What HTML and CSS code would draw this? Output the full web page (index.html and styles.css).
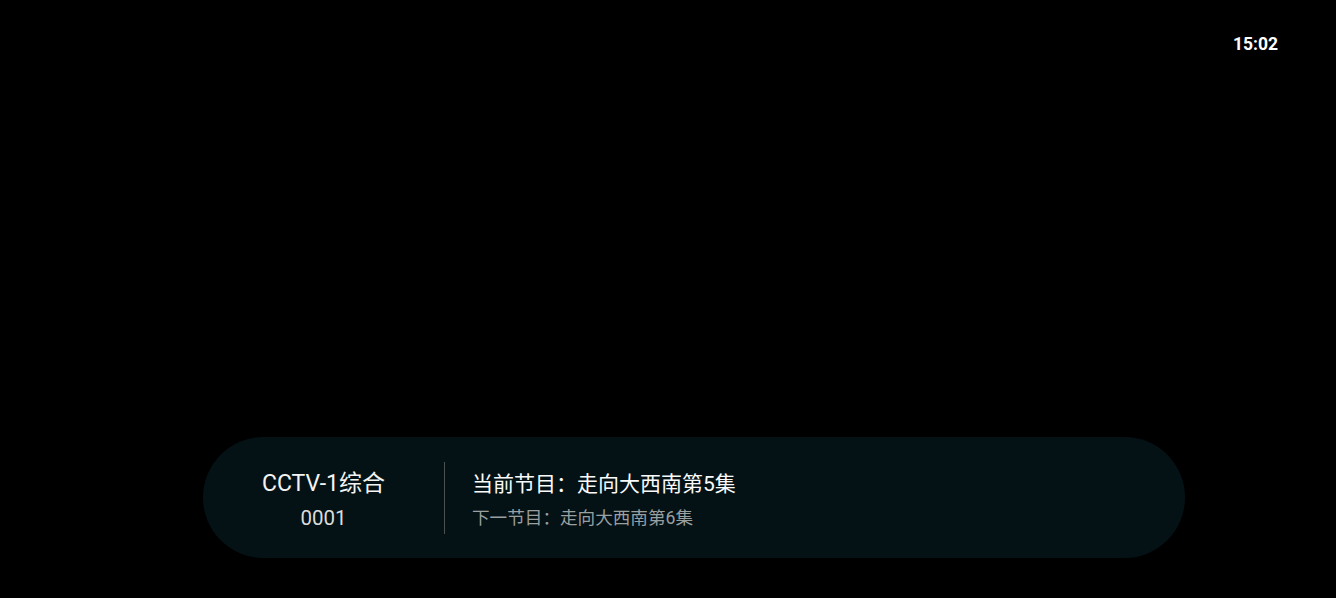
FILE: index.html
```html
<!DOCTYPE html>
<html lang="zh-CN">
<head>
<meta charset="utf-8">
<title>Live TV</title>
<link rel="stylesheet" href="styles.css">
</head>
<body>
<div class="screen">
  <div class="topbar"><span class="clock">15:02</span></div>
  <div class="spacer"></div>
  <div class="info-bar">
    <div class="channel">
      <div class="channel-name">CCTV-1综合</div>
      <div class="channel-no">0001</div>
    </div>
    <div class="divider"></div>
    <div class="programs">
      <div class="current">当前节目：走向大西南第5集</div>
      <div class="next">下一节目：走向大西南第6集</div>
    </div>
  </div>
</div>
</body>
</html>
```

FILE: styles.css
```css
html, body {
  margin: 0;
  padding: 0;
  background: #000;
}
body {
  font-family: Roboto, "Noto Sans CJK SC", sans-serif;
  color: #fff;
}
.screen {
  width: 1336px;
  height: 598px;
  display: flex;
  flex-direction: column;
  box-sizing: border-box;
  padding-bottom: 40px;
}
.topbar {
  display: flex;
  justify-content: flex-end;
  padding: 33px 58px 0 0;
}
.clock {
  font-size: 17.5px;
  font-weight: 700;
  line-height: 22px;
}
.spacer {
  flex: 1;
}
.info-bar {
  margin-left: 203px;
  width: 982px;
  height: 121px;
  border-radius: 61px;
  background: #041215;
  display: flex;
  align-items: center;
}
.channel {
  width: 241px;
  display: flex;
  flex-direction: column;
  align-items: center;
  margin-top: 5px;
}
.channel-name {
  font-size: 23px;
  line-height: 28px;
  color: #f4f4f4;
}
.channel-no {
  font-size: 20.5px;
  line-height: 26px;
  margin-top: 7px;
  color: #dcdcdc;
}
.divider {
  width: 1px;
  height: 72px;
  background: #4a5254;
}
.programs {
  padding-left: 27px;
  display: flex;
  flex-direction: column;
  margin-top: 4px;
}
.current {
  font-size: 21px;
  line-height: 28px;
  color: #fafafa;
}
.next {
  font-size: 17.6px;
  line-height: 24px;
  margin-top: 8px;
  color: #9a9fa0;
}
```
